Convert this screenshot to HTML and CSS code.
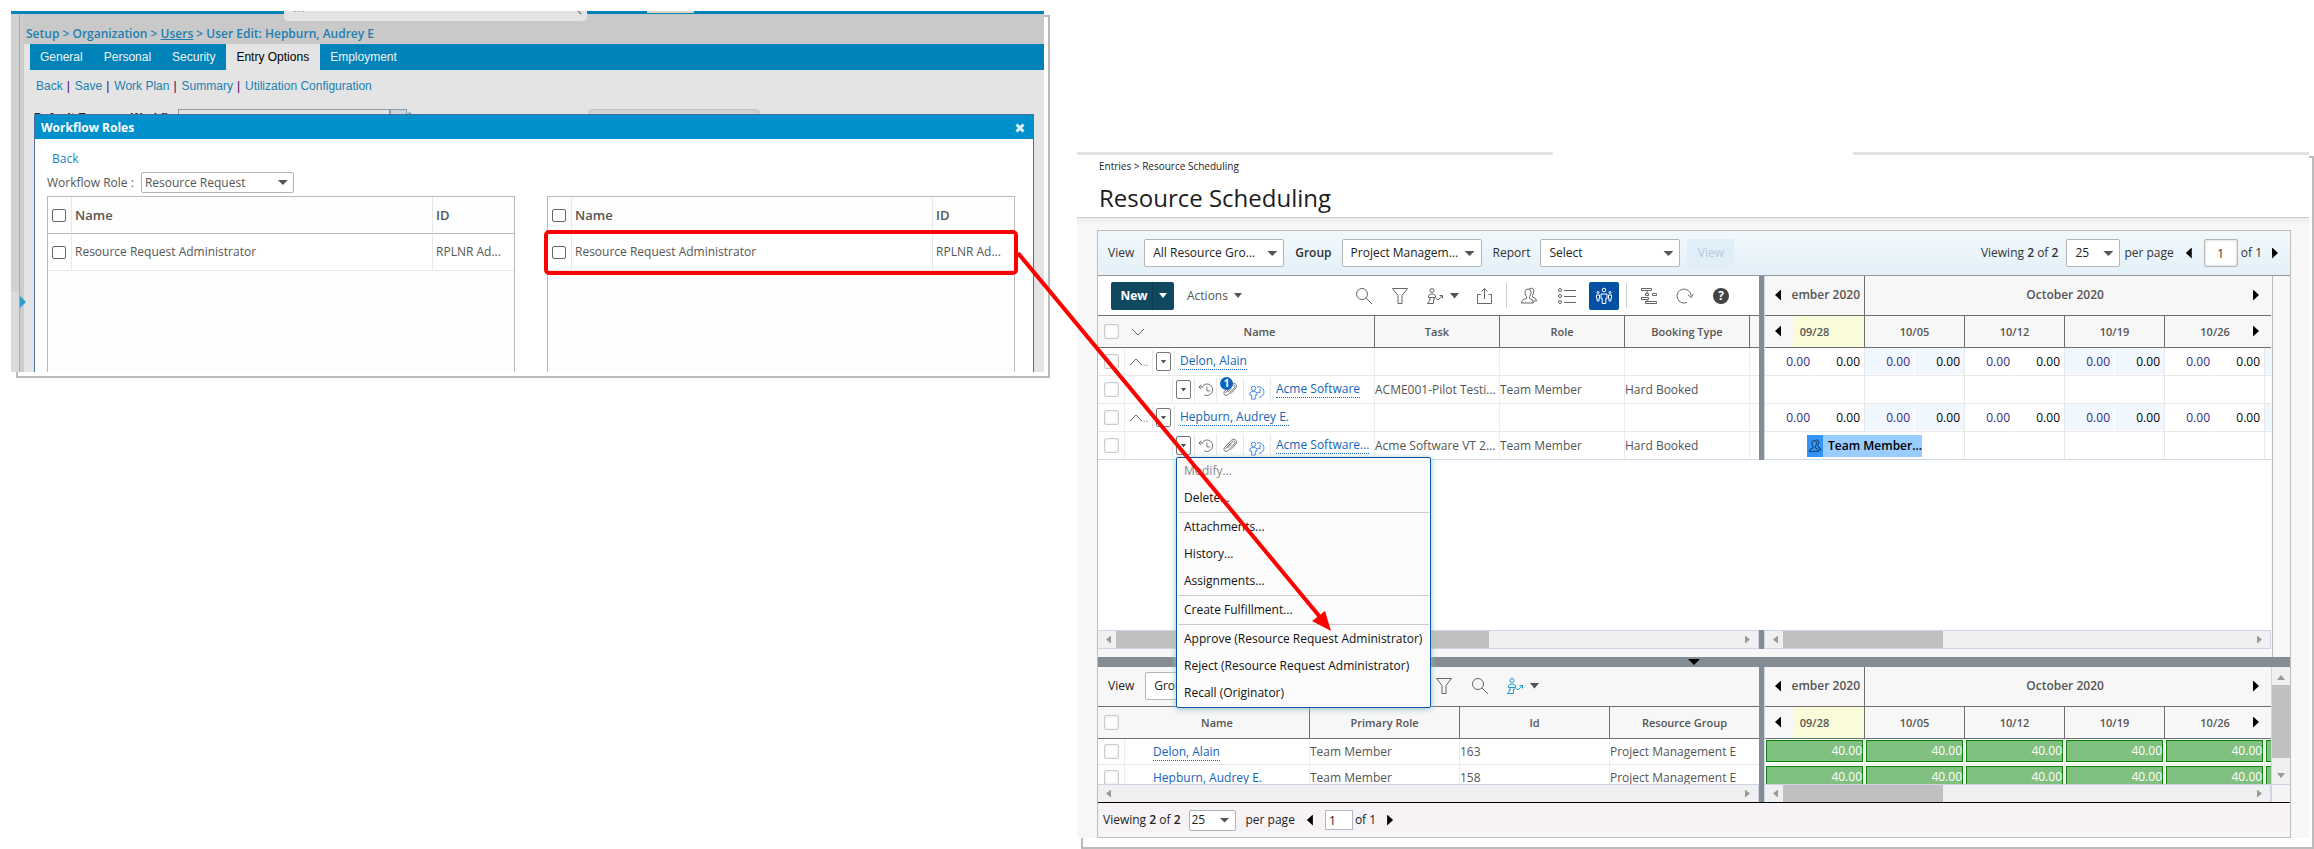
FILE: index.html
```html
<!DOCTYPE html>
<html lang="en">
<head>
<meta charset="utf-8">
<title>Resource Scheduling</title>
<link rel="stylesheet" href="styles.css">
</head>
<body>
<svg class="defs" aria-hidden="true">
  <symbol id="i-search" viewBox="0 0 18 18"><circle cx="7" cy="7" r="5.5"/><path d="M11 11l6 6"/></symbol>
  <symbol id="i-filter" viewBox="0 0 18 18"><path d="M1.500 1.500h15l-5.500 7v8h-4v-8z"/></symbol>
  <symbol id="i-person" viewBox="0 0 18 18"><circle cx="6" cy="3.500" r="2"/><path d="M2.500 10.500V9Q3 7 6 7t3.500 2v1.500H2.500M4 12.500l-2.500 4h6v-4M4 10.500v3M8 10.500v2.500M9.500 11l2.500 2 4.500-4.500M13.500 8.500h3v3"/></symbol>
  <symbol id="i-share" viewBox="0 0 18 18"><path d="M4.500 7.500h-3v9h14v-9h-3M8.500 12V1.500M5.500 4.500l3-3 3 3"/></symbol>
  <symbol id="i-users" viewBox="0 0 18 18"><path d="M6.500 9.500Q4.500 7 5 4.500 5.500 2 8 2t3 2.500-1.500 5v2q4 1 4 4.500h-12q0-3.500 5-4.500zM9.500 1.500q2-.8 3.500.5t.5 4l-1 2.500v1.500q4 .8 4 4h-3"/></symbol>
  <symbol id="i-list" viewBox="0 0 20 18"><circle cx="3" cy="3" r="1.500"/><circle cx="3" cy="9" r="1.500"/><circle cx="3" cy="15" r="1.500"/><path d="M7 3.500h12M7 9.500h12M7 15.500h12"/></symbol>
  <symbol id="i-team" viewBox="0 0 18 18"><circle cx="9" cy="3" r="1.800"/><path d="M6 7h6v4.500h-1.200v5H7.200v-5H6z"/><circle cx="3" cy="5.500" r="1"/><circle cx="15" cy="5.500" r="1"/><path d="M1.500 8h3v3.500H4V14H2.200v-2.500h-.7zM13.500 8h3v3.500h-.7V14H14v-2.500h-.5z"/></symbol>
  <symbol id="i-gantt" viewBox="0 0 18 18"><path d="M1.500 1.500h10v2h-10zM5.500 6.500h3v2h-3zM12.500 6.500h4v2h-4zM1.500 10.500h7v2h-7zM5.500 14.500h11v2h-11zM7 3.500v3M7 12.500v2"/></symbol>
  <symbol id="i-refresh" viewBox="0 0 18 18"><path d="M11 15.400A7 7 0 1 1 15 8.500M12 8l3.300 2.500L17 7"/></symbol>
  <symbol id="i-history" viewBox="0 0 18 18"><path d="M5.500 4A6.500 6.500 0 1 1 7 14.500M1 5.500h5.500M3.800 3L1 5.500 3.800 8M10 5v5h4"/></symbol>
  <symbol id="i-clip" viewBox="0 0 18 18"><path d="M4 12l7.500-8q1.500-1 2.500 0t0 2.500L6.500 14.500q-2 1.500-3.500 0t-.5-3.500L10.500 2.500q2.500-2 4.500-.5t1 4.500L10 13M6 11.500l5-5"/></symbol>
  <symbol id="i-booked" viewBox="0 0 18 18"><circle cx="5" cy="5" r="2.500"/><path d="M1 12.500V10q.5-1.500 4-1.500T9 10v2.500H7V17H3v-4.500zM9 3.300A6 6 0 1 1 11 15M12.500 5v4.500h-3"/></symbol>
</svg>
<main class="canvas">

<section class="shot setup" aria-label="User setup">
  <div class="setup-top"><span class="search-tab"><i></i></span><span class="top-chip"></span></div>
  <div class="setup-body">
    <aside class="rail"><button class="rail-handle" aria-label="Expand menu"></button></aside>
    <div class="setup-main">
      <nav class="crumbs"><a href="#">Setup</a> &gt; <a href="#">Organization</a> &gt; <a href="#" class="on">Users</a> &gt; User Edit: Hepburn, Audrey E</nav>
      <div class="setup-page">
        <nav class="tabs"><a href="#">General</a><a href="#">Personal</a><a href="#">Security</a><a href="#" class="active">Entry Options</a><a href="#">Employment</a></nav>
        <nav class="sublinks"><a href="#">Back</a><b>|</b><a href="#">Save</a><b>|</b><a href="#">Work Plan</a><b>|</b><a href="#">Summary</a><b>|</b><a href="#">Utilization Configuration</a></nav>
        <div class="clipped">
          <label for="dw">Default Expense Workflow</label><input id="dw" type="text"><button class="pick" aria-label="Pick workflow"></button><span class="star">*</span><button class="ghost" aria-label="Workflow roles"></button>
        </div>
        <section class="dialog" role="dialog" aria-labelledby="dt">
          <header><h2 id="dt">Workflow Roles</h2><button aria-label="Close"><svg viewBox="0 0 10 10"><path d="M1.500 1.500l7 7M8.500 1.500l-7 7"/></svg></button></header>
          <div class="dialog-body">
            <a href="#" class="back">Back</a>
            <div class="role-row"><label for="wr">Workflow Role :</label><span class="sel"><select id="wr"><option>Resource Request</option></select></span></div>
            <div class="pair">
              <table class="roles">
                <thead><tr><th class="ck"><input type="checkbox" aria-label="Select all available"></th><th>Name</th><th class="id">ID</th></tr></thead>
                <tbody><tr><td><input type="checkbox" aria-label="Select available role"></td><td>Resource Request Administrator</td><td>RPLNR Ad...</td></tr><tr class="rest"><td colspan="3"></td></tr></tbody>
              </table>
              <table class="roles">
                <thead><tr><th class="ck"><input type="checkbox" aria-label="Select all assigned"></th><th>Name</th><th class="id">ID</th></tr></thead>
                <tbody><tr class="marked"><td><input type="checkbox" aria-label="Select assigned role"></td><td>Resource Request Administrator</td><td>RPLNR Ad...</td></tr><tr class="rest"><td colspan="3"></td></tr></tbody>
              </table>
            </div>
          </div>
        </section>
      </div>
    </div>
  </div>
</section>

<section class="shot sched" aria-label="Resource Scheduling">
  <div class="sched-top"><span></span></div>
  <header class="sched-head">
    <nav>Entries &gt; Resource Scheduling</nav>
    <h1>Resource Scheduling</h1>
  </header>
  <div class="sched-page">
  <div class="panel">
    <div class="filters">
      <label for="v1">View</label><span class="sel big"><select id="v1"><option>All Resource Gro...</option></select></span>
      <label for="g1"><b>Group</b></label><span class="sel big"><select id="g1"><option>Project Managem...</option></select></span>
      <label for="r1">Report</label><span class="sel big"><select id="r1"><option>Select</option></select></span>
      <button class="view-btn" disabled>View</button>
      <div class="pager">
        <span>Viewing <b>2</b> of <b>2</b></span><span class="sel big num"><select aria-label="Rows per page"><option>25</option></select></span><span>per page</span>
        <button class="tri l" aria-label="Previous page"></button><input class="pg" type="text" value="1" aria-label="Page"><span>of 1</span><button class="tri r" aria-label="Next page"></button>
      </div>
    </div>

    <div class="split">
      <div class="col left">
        <div class="tools">
          <div class="new"><button>New</button><button aria-label="More new options"><i class="dn"></i></button></div>
          <button class="actions">Actions <i class="dn"></i></button>
          <div class="icons">
            <button aria-label="Search"><svg><use href="#i-search"/></svg></button>
            <button aria-label="Filter"><svg><use href="#i-filter"/></svg></button>
            <button class="duo" aria-label="Assign"><svg><use href="#i-person"/></svg><i class="dn"></i></button>
            <button aria-label="Export"><svg><use href="#i-share"/></svg></button>
            <hr>
            <button aria-label="Users"><svg><use href="#i-users"/></svg></button>
            <button class="list" aria-label="List"><svg><use href="#i-list"/></svg></button>
            <button class="sel-on" aria-label="Team view"><svg><use href="#i-team"/></svg></button>
            <hr class="wide">
            <button aria-label="Gantt"><svg><use href="#i-gantt"/></svg></button>
            <button aria-label="Refresh"><svg><use href="#i-refresh"/></svg></button>
            <button aria-label="Help"><span class="help">?</span></button>
          </div>
        </div>
        <table class="grid main">
          <colgroup><col class="c-ck"><col><col class="c-m"><col class="c-m"><col class="c-m"><col class="c-end"></colgroup>
          <thead><tr><th><input type="checkbox" aria-label="Select all"></th><th class="nm"><svg class="chev" viewBox="0 0 14 8"><path d="M1 1l6 6 6-6"/></svg><span>Name</span></th><th>Task</th><th>Role</th><th>Booking Type</th><th></th></tr></thead>
          <tbody>
            <tr><td><input type="checkbox" aria-label="Select Delon"></td><td><div class="cells"><span class="k28"><svg class="chev" viewBox="0 0 14 8"><path d="M1 7l6-6 6 6"/></svg><small>..</small></span><span class="k22"><button class="drop" aria-label="Menu"><i class="dn"></i></button></span><a href="#">Delon, Alain</a></div></td><td></td><td></td><td></td><td></td></tr>
            <tr><td><input type="checkbox" aria-label="Select booking"></td><td><div class="cells"><span class="k49"></span><span class="k22"><button class="drop" aria-label="Menu"><i class="dn"></i></button></span><span class="k22"><svg><use href="#i-history"/></svg></span><span class="k27"><svg><use href="#i-clip"/></svg><em class="badge">1</em></span><span class="k27 blue"><svg><use href="#i-booked"/></svg></span><a href="#">Acme Software</a></div></td><td>ACME001-Pilot Testi...</td><td>Team Member</td><td>Hard Booked</td><td></td></tr>
            <tr><td><input type="checkbox" aria-label="Select Hepburn"></td><td><div class="cells"><span class="k28"><svg class="chev" viewBox="0 0 14 8"><path d="M1 7l6-6 6 6"/></svg><small>..</small></span><span class="k22"><button class="drop" aria-label="Menu"><i class="dn"></i></button></span><a href="#">Hepburn, Audrey E.</a></div></td><td></td><td></td><td></td><td></td></tr>
            <tr><td><input type="checkbox" aria-label="Select booking"></td><td><div class="cells"><span class="k49"></span><span class="k22 anchor"><button class="drop" aria-label="Menu"><i class="dn"></i></button>
              <div class="menu" role="menu">
                <div><button disabled>Modify...</button><button>Delete...</button></div>
                <div><button>Attachments...</button><button>History...</button><button>Assignments...</button></div>
                <div><button>Create Fulfillment...</button></div>
                <div><button>Approve (Resource Request Administrator)</button><button>Reject (Resource Request Administrator)</button><button>Recall (Originator)</button></div>
              </div></span><span class="k22"><svg><use href="#i-history"/></svg></span><span class="k27"><svg><use href="#i-clip"/></svg></span><span class="k27 blue"><svg><use href="#i-booked"/></svg></span><a href="#">Acme Software...</a></div></td><td>Acme Software VT 2...</td><td>Team Member</td><td>Hard Booked</td><td></td></tr>
          </tbody>
        </table>
      </div>
      <div class="bar"></div>
      <div class="col right">
        <table class="time">
          <colgroup><col span="10" class="c-h"><col></colgroup>
          <thead>
            <tr class="mon"><th colspan="2" class="first"><button class="tri l" aria-label="Earlier month"></button><span>ember 2020</span></th><th colspan="8">October 2020</th><th class="edge"><button class="tri r" aria-label="Later month"></button></th></tr>
            <tr class="wk"><th colspan="2" class="first now"><button class="tri l" aria-label="Earlier week"></button><span>09/28</span></th><th colspan="2">10/05</th><th colspan="2">10/12</th><th colspan="2">10/19</th><th colspan="2">10/26</th><th class="edge"><button class="tri r" aria-label="Later week"></button></th></tr>
          </thead>
          <tbody>
            <tr class="n"><td>0.00</td><td>0.00</td><td class="t">0.00</td><td class="t">0.00</td><td>0.00</td><td>0.00</td><td class="t">0.00</td><td class="t">0.00</td><td>0.00</td><td>0.00</td><td class="t"></td></tr>
            <tr><td colspan="2"></td><td colspan="2"></td><td colspan="2"></td><td colspan="2"></td><td colspan="2"></td><td></td></tr>
            <tr class="n"><td>0.00</td><td>0.00</td><td class="t">0.00</td><td class="t">0.00</td><td>0.00</td><td>0.00</td><td class="t">0.00</td><td class="t">0.00</td><td>0.00</td><td>0.00</td><td class="t"></td></tr>
            <tr><td colspan="4"><div class="booking"><svg><use href="#i-users"/></svg><b>Team Member...</b></div></td><td colspan="2"></td><td colspan="2"></td><td colspan="2"></td><td></td></tr>
          </tbody>
        </table>
      </div>
      <div class="gutter"></div>
    </div>
    <div class="split blank"><div class="space"></div><div class="gutter"></div></div>
    <div class="split scrolls">
      <div class="hs lg"><i class="a l"></i><i class="thumb"></i><i class="a r"></i></div><div class="bar"></div><div class="hs"><i class="a l"></i><i class="thumb"></i><i class="a r"></i></div><div class="gutter"></div>
    </div>
    <div class="split pad"><div class="space"></div><div class="gutter"></div></div>
    <div class="hbar"><i class="dn"></i></div>

    <div class="split lower">
      <div class="col left">
        <div class="tools grey">
          <label for="v2">View</label><span class="sel big"><select id="v2"><option>Group</option></select></span>
          <div class="icons low">
            <button aria-label="Filter"><svg><use href="#i-filter"/></svg></button>
            <button aria-label="Search"><svg><use href="#i-search"/></svg></button>
            <button class="duo cyan" aria-label="Assign"><svg><use href="#i-person"/></svg><i class="dn"></i></button>
          </div>
        </div>
        <div class="clip">
        <table class="grid people">
          <colgroup><col class="c-ck"><col><col class="c-p"><col class="c-p"><col class="c-p"></colgroup>
          <thead><tr><th><input type="checkbox" aria-label="Select all people"></th><th>Name</th><th>Primary Role</th><th>Id</th><th>Resource Group</th></tr></thead>
          <tbody>
            <tr><td><input type="checkbox" aria-label="Select Delon, Alain"></td><td class="who"><a href="#">Delon, Alain</a></td><td>Team Member</td><td>163</td><td>Project Management E</td></tr>
            <tr><td><input type="checkbox" aria-label="Select Hepburn, Audrey E."></td><td class="who"><a href="#">Hepburn, Audrey E.</a></td><td>Team Member</td><td>158</td><td>Project Management E</td></tr>
          </tbody>
        </table>
        </div>
        <div class="hs"><i class="a l"></i><i class="a r"></i></div>
      </div>
      <div class="bar"></div>
      <div class="col right">
        <div class="clip tall">
        <table class="time load">
          <colgroup><col span="10" class="c-h"><col></colgroup>
          <thead>
            <tr class="mon"><th colspan="2" class="first"><button class="tri l" aria-label="Earlier month"></button><span>ember 2020</span></th><th colspan="8">October 2020</th><th class="edge"><button class="tri r" aria-label="Later month"></button></th></tr>
            <tr class="wk"><th colspan="2" class="first now"><button class="tri l" aria-label="Earlier week"></button><span>09/28</span></th><th colspan="2">10/05</th><th colspan="2">10/12</th><th colspan="2">10/19</th><th colspan="2">10/26</th><th class="edge"><button class="tri r" aria-label="Later week"></button></th></tr>
          </thead>
          <tbody>
            <tr><td colspan="2"><p>40.00</p></td><td colspan="2"><p>40.00</p></td><td colspan="2"><p>40.00</p></td><td colspan="2"><p>40.00</p></td><td colspan="2"><p>40.00</p></td><td class="cut"><p></p></td></tr>
            <tr><td colspan="2"><p>40.00</p></td><td colspan="2"><p>40.00</p></td><td colspan="2"><p>40.00</p></td><td colspan="2"><p>40.00</p></td><td colspan="2"><p>40.00</p></td><td class="cut"><p></p></td></tr>
          </tbody>
        </table>
        </div>
        <div class="hs"><i class="a l"></i><i class="thumb"></i><i class="a r"></i></div>
      </div>
      <div class="vs"><i class="a u"></i><i class="thumb"></i><i class="a d"></i><span class="corner"></span></div>
    </div>
    <footer class="foot">
      <span>Viewing <b>2</b> of <b>2</b></span><span class="sel sm"><select aria-label="Rows per page"><option>25</option></select></span><span>per page</span>
      <button class="tri l" aria-label="Previous page"></button><input type="text" value="1" aria-label="Page"><span>of 1</span><button class="tri r" aria-label="Next page"></button>
    </footer>
  </div>
  </div>
</section>

<svg class="callout" viewBox="0 0 320 384" aria-hidden="true"><path class="ln" d="M0 1L302 365"/><path class="hd" d="M313 379L294 369 307 359z"/></svg>
</main>
</body>
</html>
```

FILE: styles.css
```css
* { box-sizing: border-box; }
body { margin: 0; background: #fff; font: 12px/16px "Open Sans", "Noto Sans", sans-serif; color: #555; }
a { color: #1464b8; text-decoration: none; }
button, select, input { font: inherit; color: inherit; margin: 0; }
button { border: 0; background: none; padding: 0; }
h1, h2, p { margin: 0; font-weight: 400; }
b, th { font-weight: 600; }
table { border-collapse: separate; border-spacing: 0; table-layout: fixed; width: 100%; }
th, td { padding: 0; white-space: nowrap; text-align: left; }
i { display: block; flex: none; }
svg { display: block; fill: none; stroke: #666; stroke-width: 1; width: 18px; height: 18px; flex: none; }
.defs { position: absolute; width: 0; height: 0; }

.canvas { position: relative; display: grid; grid-template-columns: 1033fr 1232fr; gap: 33px; padding: 11px 5px 11px 11px; align-items: start; overflow: hidden; }
.shot { position: relative; min-width: 0; }
.shot::before { content: ""; position: absolute; z-index: -1; inset: 4px -6px -6px 5px; border: 2px solid #bbb; }

/* shared pieces */
.dn { width: 10px; height: 6px; background: #555; clip-path: polygon(0 0, 100% 0, 50% 100%); }
.tri { width: 6px; height: 11px; background: #000; flex: none; }
.tri.l { clip-path: polygon(100% 0, 100% 100%, 0 50%); }
.tri.r { clip-path: polygon(0 0, 0 100%, 100% 50%); }
.sel { position: relative; display: block; }
.sel select { appearance: none; display: block; width: 100%; height: 21px; padding: 0 20px 0 3px; border: 1px solid #a9b4bb; border-radius: 2px; background: #fff; }
.sel::after { content: ""; position: absolute; right: 6px; top: 8px; width: 10px; height: 5px; background: #555; clip-path: polygon(0 0, 100% 0, 50% 100%); }
.sel.big select { height: 28px; padding-left: 8px; border-color: #b5b5b5; color: #222; }
.sel.big::after { top: 12px; right: 7px; }

/* user setup window */
.setup { height: 361px; overflow: visible; display: flex; flex-direction: column; }
.setup-top { position: relative; z-index: 1; height: 3px; background: #0083b8; }
.search-tab { position: absolute; left: 273px; top: 0; width: 303px; height: 10px; overflow: hidden; border-radius: 0 0 4px 4px; background: #e4e4e4; }
.search-tab::before { content: ""; position: absolute; left: 10px; top: 0; width: 12px; height: 1px; background: repeating-linear-gradient(90deg, #aaa 0 2px, transparent 2px 4px); }
.search-tab i { position: absolute; right: 5px; top: 1px; width: 5px; height: 1px; background: #555; transform: rotate(45deg); }
.top-chip { position: absolute; left: 636px; top: 0; width: 47px; height: 2px; background: #d8d8cc; }
.setup-body { flex: 1; display: flex; min-height: 0; }
.rail { position: relative; flex: none; width: 13px; border-right: 4px solid #cdcdcd; background: linear-gradient(90deg, transparent 8px, #aaa 8px), linear-gradient(#d2d2d2 278px, #dbdbdb 278px); }
.rail-handle { position: absolute; left: 9px; top: 282px; width: 6px; height: 12px; background: #2f9ac9; clip-path: polygon(0 0, 100% 50%, 0 100%); }
.setup-main { flex: 1; min-width: 0; display: flex; flex-direction: column; background: #c9c9c9; }
.crumbs { padding: 12px 0 2px 2px; color: #1d7fb0; font-size: 12px; font-weight: 600; }
.crumbs a { color: inherit; }
.crumbs .on { text-decoration: underline; }
.setup-page { flex: 1; min-height: 0; display: flex; flex-direction: column; background: #e4e4e4; overflow: hidden; }
.tabs { display: flex; flex: none; margin-left: 6px; background: #0083b8; font-family: "Liberation Sans", Arial, sans-serif; line-height: 26px; }
.tabs a { padding: 0 11px 0 10px; color: #f2f2f2; }
.tabs .active { background: #e4e4e4; color: #000; }
.sublinks { flex: none; display: flex; padding: 8px 12px 15px; font-family: "Liberation Sans", Arial, sans-serif; }
.sublinks a { color: #1d7fb0; }
.sublinks b { font-weight: 400; color: #406; padding: 0 5px 0 4px; }
.clipped { flex: none; display: flex; height: 5px; padding-left: 10px; overflow: hidden; font: bold 12px/16px "Liberation Sans", Arial, sans-serif; color: #222; }
.clipped label { width: 144px; overflow: hidden; white-space: nowrap; margin-top: 1px; }
.clipped input { width: 212px; height: 20px; border: 1px solid #999; background: #e4e4e4; }
.clipped .pick { width: 17px; height: 20px; border: 1px solid #7aa2bd; background: #d4d4d4; }
.clipped .star { color: #1d7fb0; font-weight: 400; }
.clipped .ghost { width: 172px; height: 20px; margin-left: 176px; border: 1px solid #c4c4c4; border-radius: 4px; background: #d2d2d2; }
.dialog { flex: 1; min-height: 0; margin: 0 10px; border: 1px solid #4a6ea5; border-bottom: 0; background: #fff; }
.dialog header { display: flex; justify-content: space-between; align-items: center; height: 24px; padding: 1px 8px 0 6px; background: #0090cc; }
.dialog h2 { font-size: 12px; font-weight: 700; color: #fff; }
.dialog header svg { width: 10px; height: 10px; stroke: #e0f0f8; stroke-width: 3; }
.dialog-body { padding: 12px 18px 0 12px; }
.back { display: block; width: 80px; padding-left: 5px; color: #1d82c0; }
.role-row { display: flex; align-items: center; gap: 7px; margin: 5px 0 3px; }
.role-row .sel { width: 153px; }
.pair { display: grid; grid-template-columns: 1fr 1fr; gap: 32px; }
.roles { border: 1px solid #bbb; background: #fdfdfd; }
.roles th, .roles td { height: 37px; padding-left: 3px; border-right: 1px solid #e8e8e8; }
.roles th { font-size: 13px; border-bottom: 1px solid #bbb; }
.roles td { border-bottom: 1px solid #e8e8e8; background: #fff; }
.roles tr > :last-child { border-right: 0; }
.roles .ck { width: 24px; }
.roles .id { width: 81px; }
.roles .rest td { height: 101px; background: #fdfdfd; border-bottom: 0; }
.roles input { display: block; width: 14px; height: 13px; margin-left: 1px; appearance: none; border: 1px solid #666; border-radius: 2px; background: #fff; }
.roles .marked { outline: 4px solid #f00; outline-offset: 0; border-radius: 1px; position: relative; }

/* scheduling window */
.sched { margin-top: 141px; background: #fff; }
.sched::before { inset: 4px -5px -11px 4px; }
.sched-top { height: 3px; background: #e1e1e1; display: grid; grid-template-columns: 476fr 300fr 456fr; }
.sched-top span { grid-column: 2; background: #fff; }
.sched-head { padding: 3px 22px 0; border-bottom: 1px solid #ccc; color: #1c1c1c; height: 63px; background: #fff; }
.sched-head nav { font-size: 10px; }
.sched-head h1 { font-size: 24px; line-height: 34px; margin-top: 7px; }
.sched-page { padding: 12px 18px 0 20px; background: linear-gradient(#ececec, #f7f7f7 6px); }
.panel { border: 1px solid #bdbdbd; background: #f7f7f7; }
.filters { display: flex; align-items: center; height: 45px; padding: 0 12px 0 10px; border-bottom: 1px solid #999; background: linear-gradient(#f2f9fc, #e3f0f8); color: #333; }
.filters > label { margin-right: 10px; }
.filters > .sel { width: 140px; margin-right: 11px; }
.filters > .sel:nth-of-type(3) { margin-right: 7px; }
.view-btn { width: 47px; height: 28px; border-radius: 2px; background: #e0eef7; color: #b5cad6; }
.pager { display: flex; align-items: center; margin-left: auto; }
.pager .num { width: 54px; margin: 0 4px 0 8px; }
.pager .l { margin-left: 12px; }
.pager .r { margin-left: 10px; }
.pager input { width: 34px; height: 28px; margin: 0 3px 0 12px; padding: 0; text-align: center; border: 1px solid #b5b5b5; border-radius: 2px; background: #fff; box-shadow: inset 0 0 3px #ccc; }

.split { display: grid; grid-template-columns: minmax(0, 661fr) 6px minmax(0, 506fr) 19px; }
.bar { background: #848c95; border-right: 1px solid #ccd6e4; }
.gutter { border-left: 1px solid #bbb; background: #f7f7f7; margin-left: 1px; }
.col { min-width: 0; background: #fff; }
.blank, .pad { grid-template-columns: 1fr 19px; }
.blank .space { height: 170px; background: #fff; }
.pad .space { height: 8px; }
.tools { display: flex; align-items: center; height: 40px; padding-left: 13px; border-bottom: 1px solid #707070; }
.tools.grey { background: #f7f7f7; padding: 0 0 2px 10px; color: #222; }
.tools.grey .sel { width: 141px; margin-left: 11px; }
.new { display: flex; border-radius: 2px; overflow: hidden; background: #0f485f; color: #fff; font-weight: 700; height: 28px; }
.new button { width: 41px; padding-left: 5px; }
.new button + button { width: 22px; padding-left: 6px; border-left: 1px solid #0b3d52; }
.new .dn { background: #fff; width: 8px; height: 5px; }
.actions { display: flex; align-items: center; gap: 6px; margin-left: 13px; font-size: 13px; font-size: 12px; }
.actions .dn { width: 8px; height: 5px; }
.icons { display: flex; align-items: center; margin-left: auto; padding-right: 20px; }
.icons button { display: flex; justify-content: center; align-items: center; width: 36px; height: 28px; }
.icons .duo { width: 49px; gap: 6px; }
.icons .list { width: 40px; margin-right: 2px; }
.icons .list svg { width: 20px; }
.icons .sel-on { width: 30px; border-radius: 2px; background: #0350a3; }
.icons .sel-on svg { stroke: #fff; }
.icons hr { width: 1px; height: 25px; margin: 0 4px 0 3px; border: 0; background: #ccc; }
.icons hr.wide { margin: 0 4px 0 7px; }
.icons.low { padding-right: 212px; }
.cyan svg { stroke: #1a9ad6; }
.help { width: 16px; height: 16px; border-radius: 8px; background: #444; color: #fff; font-weight: 700; }

.grid th { height: 32px; font-size: 11px; text-align: center; background: #f7f7f7; border-bottom: 1px solid #707070; border-right: 1px solid #707070; }
.grid tr > :last-child { border-right: 0; }
.grid th:first-child { border-right: 0; }
.grid td { height: 28px; border-bottom: 1px solid #e8e8e8; border-right: 1px solid #ececec; }
.main tbody tr:last-child td { border-bottom-color: #ccd6e4; }
.grid input { appearance: none; display: block; width: 15px; height: 15px; margin-left: 6px; border: 1px solid #ccc; border-radius: 2px; background: #fff; box-shadow: inset 0 0 3px #ddd; }
.c-ck { width: 27px; }
.c-m { width: 125px; }
.c-end { width: 9px; }
.c-p { width: 150px; }
.people .c-p:last-child { width: 149px; }
.nm span { display: block; padding-left: 20px; }
.chev { width: 14px; height: 8px; }
.nm .chev { float: left; margin: 4px 0 0 6px; }
.cells { display: flex; align-items: center; height: 26px; }
.cells > span { position: relative; display: flex; align-items: center; justify-content: center; flex: none; height: 24px; border-right: 1px solid #e8e8e8; }
.cells > span svg { width: 16px; height: 16px; }
.cells > span .chev { width: 14px; height: 8px; }
.cells small { color: #888; }
.cells a { margin-left: 5px; line-height: 16px; border-bottom: 1px dotted #1464b8; }
.k28 { width: 28px; }
.k49 { width: 48px; }
.k22 { width: 22px; }
.k27 { width: 27px; }
.blue svg { stroke: #2e7de0; }
.cells > .blue { padding-top: 4px; }
.drop { display: flex; align-items: center; justify-content: center; width: 15px; height: 19px; border: 1px solid #777; border-radius: 2px; background: #fff; }
.drop .dn { width: 6px; height: 4px; }
.badge { position: absolute; left: 3px; top: -1px; width: 13px; height: 13px; border-radius: 7px; background: #0a63c2; color: #fff; font: 700 10px/13px "Open Sans", sans-serif; text-align: center; }
.menu { position: absolute; z-index: 3; left: 3px; top: 23px; width: 255px; padding: 0 1px; border: 1px solid #0a55a5; border-radius: 2px; background: #fcfcfc; box-shadow: 0 1px 6px #9bb; }
.menu div + div { border-top: 1px solid #ccc; padding-top: 1px; }
.menu button { display: block; width: 100%; height: 27px; padding-left: 6px; text-align: left; color: #111; }
.menu button:disabled { color: #888; }

.time th { height: 32px; font-size: 11px; text-align: center; background: #f7f7f7; border-bottom: 1px solid #707070; border-right: 1px solid #707070; }
.time .mon th { height: 40px; font-size: 12px; padding-bottom: 2px; }
.time .mon th:nth-child(2) { border-right: 0; }
.time .wk th:nth-child(5) { border-right: 0; }
.c-h { width: 50px; }
.time .first { position: relative; }
.time .mon .first { text-align: right; padding-right: 4px; }
.time .first .tri { position: absolute; left: 10px; top: 50%; margin-top: -6px; }
.time .now { background: linear-gradient(90deg, #f7f7f7 28px, #f9fbd9 28px); }
.time th.edge { border-right: 0; position: relative; }
.time .edge .tri { position: absolute; right: 12px; top: 50%; margin-top: -6px; }
.time td { height: 28px; border-bottom: 1px solid #e8e8e8; border-right: 1px solid #e8e8e8; text-align: right; color: #000; }
.time td:last-child { border-right: 0; }
.n td:nth-child(odd) { color: #332a7c; border-right-color: #fff; padding-right: 4px; }
.n td:nth-child(even) { padding-right: 4px; }
.n .t { background: linear-gradient(#f0f7fe 26px, #fff 26px); }
.time tbody tr:last-child td { border-bottom-color: #ccd6e4; }
.booking { display: flex; align-items: center; width: 115px; height: 22px; margin-left: 42px; background: #99ccff; }
.booking svg { width: 16px; height: 22px; padding: 2px 1px; background: #3394fa; stroke: #123; }
.booking b { margin-left: 5px; font-size: 12px; }

.hs { display: flex; align-items: center; height: 19px; padding: 0 8px; border: 1px solid #ccd6e4; border-left: 0; background: #f0f0f0; }
.hs .thumb { width: 160px; height: 17px; margin-left: 5px; background: #c0c0c0; }
.hs.lg .thumb { width: 373px; }
.hs .a { width: 5px; height: 8px; background: #999; }
.a.l { clip-path: polygon(100% 0, 100% 100%, 0 50%); }
.hs .a.r { margin-left: auto; clip-path: polygon(0 0, 0 100%, 100% 50%); }
.hbar { height: 10px; background: #848c95; display: flex; justify-content: center; align-items: center; }
.hbar .dn { width: 12px; background: #000; }
.lower .hs { height: 18px; border-bottom: 0; }
.clip { height: 77px; overflow: hidden; }
.clip.tall { height: 117px; }
.people td { height: 26px; }
.people .who { padding-left: 28px; border-right-color: #ececec; }
.who a { border-bottom: 1px dotted #1464b8; }
.load td { height: 26px; padding: 1px; vertical-align: top; }
.load td p { height: 22px; border: 1px solid #0a820a; background: #80c080; color: #fff; line-height: 20px; text-align: right; }
.load .cut { padding-right: 0; }
.load .cut p { border-right: 0; }
.vs { display: flex; flex-direction: column; align-items: center; border-left: 1px solid #ccd6e4; background: #f0f0f0; }
.vs .a { width: 8px; height: 5px; background: #999; }
.vs .u { margin-top: 8px; clip-path: polygon(0 100%, 100% 100%, 50% 0); }
.vs .d { margin-top: 15px; clip-path: polygon(0 0, 100% 0, 50% 100%); }
.vs .thumb { width: 18px; height: 73px; margin-top: 5px; background: #c0c0c0; }
.vs .corner { width: 18px; height: 18px; margin-top: auto; border-top: 1px solid #ccd6e4; background: #f4f4f4; }
.foot { display: flex; align-items: center; height: 35px; padding-left: 5px; border-top: 1px solid #000; background: linear-gradient(#f6f2f6 24px, #f7f7f7); color: #222; }
.foot .sel { width: 47px; margin: 0 10px 0 8px; }
.foot .sel select { padding: 0 0 0 2px; }
.foot .l { margin-left: 12px; }
.foot .r { margin-left: 11px; }
.foot input { width: 28px; height: 20px; margin: 0 2px 0 12px; padding: 0 3px; border: 1px solid #b0bac2; background: #fff; }

/* arrow from the marked role to the menu entry */
.callout { position: absolute; z-index: 5; left: 1018px; top: 252px; width: 320px; height: 384px; pointer-events: none; }
.callout .ln { stroke: #f00; stroke-width: 4; }
.callout .hd { fill: #f00; stroke: none; }
```
